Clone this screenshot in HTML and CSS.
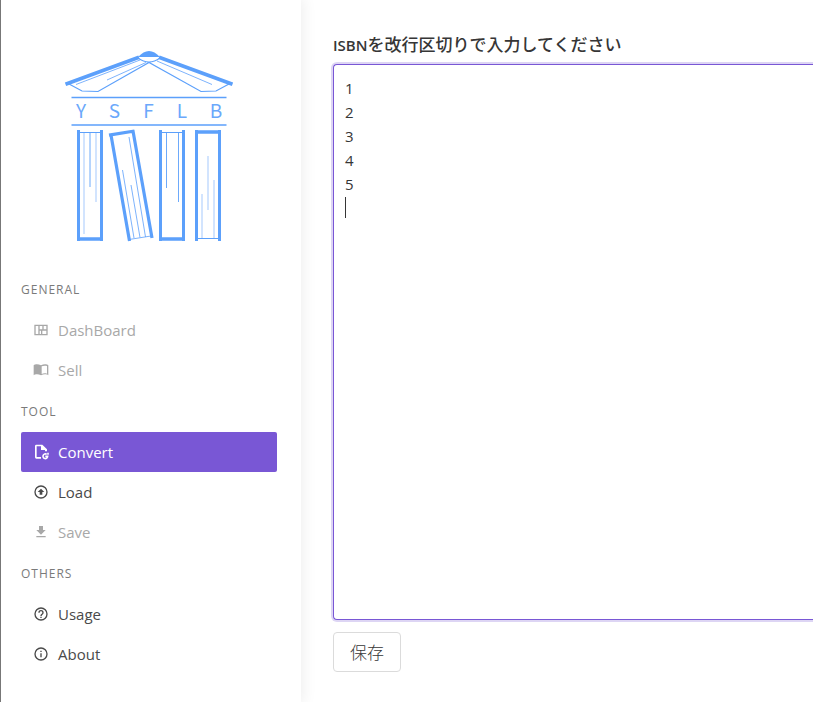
FILE: index.html
```html
<!DOCTYPE html>
<html lang="ja">
<head>
<meta charset="utf-8">
<meta name="viewport" content="width=device-width, initial-scale=1">
<title>YSFLB</title>
<link rel="stylesheet" href="styles.css">
</head>
<body>
<div class="app">
  <aside class="sidebar">
    <svg class="logo" viewBox="55 40 190 210" role="img" aria-label="YSFLB">
      <g fill="none" stroke="#5ca0fb">
        <path d="M138 57Q149 45 160 57Z" fill="#5ca0fb" stroke="none"/>
        <path d="M65.500 84.200 139 57.200M159 57.200 232.500 84.200" stroke-width="3.800"/>
        <path d="M69 84 82 91 98 91.500 149 62.500 201 91.500 216 91 229 84M138 58Q149 66 160 58" stroke-width="1.200"/>
        <path d="M76 84.500 140 60M107 80 146 62.500M157 61 212 84.500" stroke-width=".8"/>
        <path d="M71.500 97.500H226.500M71.500 125H226.500" stroke-width="1.600"/>
        <path d="M78.500 130V241M101.500 130V241M160.500 130V241M183.500 130V241M196.500 130V241M219.500 130V241" stroke-width="3"/>
        <path d="M77 239H103M159 239H185M195 132H221" stroke-width="3.600"/>
        <path d="M79 132.500H102M161 132.500H184M196 238.500H220" />
        <path d="M90 133V187M166.500 133V188M178.500 133V202" stroke-width=".9"/>
        <path d="M84 133V234M96 133V202M208 156V210M202 194V238M214 180V238" stroke-width="1.200" stroke="#b5d3fd"/>
        <path d="M109 135.200 134.500 131M111 135 129.500 241M133 131 152 238" stroke-width="3.200"/>
        <path d="M129 239.500 151 236M129 137 145.500 237M122.500 170 134 238M131 185 140 237.500" stroke-width=".8"/>
      </g>
      <g class="logo-letters">
        <text x="81" y="118">Y</text><text x="114.500" y="118">S</text><text x="148.500" y="118">F</text><text x="182" y="118">L</text><text x="216" y="118">B</text>
      </g>
    </svg>
    <nav class="menu">
      <p class="menu-label">General</p>
      <ul>
        <li><a class="disabled" aria-disabled="true"><svg class="icon" viewBox="0 0 24 24"><path fill-rule="evenodd" d="M2 4V20H22V4ZM4 6H8V18H4ZM10 6H14V11H10ZM16 6H20V11H16ZM10 13H12V18H10ZM14 13H20V18H14Z"/></svg>DashBoard</a></li>
        <li><a class="disabled" aria-disabled="true"><svg class="icon" viewBox="0 0 24 24"><path fill-rule="evenodd" d="M12 5C10 3.800 8 3.500 6 3.500S2 4 1 5V20C2 19 4 18.500 6 18.500S10 19 12 20C14 19 16 18.500 18 18.500S22 19 23 20V5C22 4 20 3.500 18 3.500S14 3.800 12 5ZM21 17.500C18.500 16.500 15.500 16.700 13 18V6.500C15.500 5.300 18.500 5.300 21 6Z"/></svg>Sell</a></li>
      </ul>
      <p class="menu-label">Tool</p>
      <ul>
        <li><a class="active" href="#convert"><svg class="icon" viewBox="0 0 24 24"><path fill-rule="evenodd" d="M5 1H14L21 8V11H18V9H12V3.500H5.500V19.500H12V22H5Q3 22 3 20V3Q3 1 5 1Z"/><path fill="none" stroke="currentColor" stroke-width="2.400" d="M20.500 15.500A3.500 3.500 0 1 0 22 18.500H18.500M22.500 13V16"/></svg>Convert</a></li>
        <li><a href="#load"><svg class="icon" viewBox="0 0 24 24"><circle cx="12" cy="12" r="9" fill="none" stroke="currentColor" stroke-width="2"/><path d="M12 7 17 12H14V16H10V12H7Z"/></svg>Load</a></li>
        <li><a class="disabled" aria-disabled="true"><svg class="icon" viewBox="0 0 24 24"><path d="M5 20H19V18H5ZM19 9H15V3H9V9H5L12 16Z"/></svg>Save</a></li>
      </ul>
      <p class="menu-label">Others</p>
      <ul>
        <li><a href="#usage"><svg class="icon" viewBox="0 0 24 24"><circle cx="12" cy="12" r="9" fill="none" stroke="currentColor" stroke-width="2"/><path d="M11 18H13V16H11ZM12 6A4 4 0 0 0 8 10H10A2 2 0 0 1 14 10C14 12 11 11.750 11 15H13C13 12.750 16 12.500 16 10A4 4 0 0 0 12 6Z"/></svg>Usage</a></li>
        <li><a href="#about"><svg class="icon" viewBox="0 0 24 24"><circle cx="12" cy="12" r="9" fill="none" stroke="currentColor" stroke-width="2"/><path d="M11 9H13V7H11ZM11 17H13V11H11Z"/></svg>About</a></li>
      </ul>
    </nav>
  </aside>
  <main class="content">
    <label class="label" for="isbn"><span class="latin">ISBN</span>を改行区切りで入力してください</label>
    <div class="control">
      <textarea id="isbn" class="textarea" rows="22">1
2
3
4
5
</textarea>
      <span class="caret"></span>
    </div>
    <button class="button" type="button">保存</button>
  </main>
</div>
</body>
</html>
```
FILE: styles.css
```css
* {
  box-sizing: border-box;
}

body {
  margin: 0;
  background: #fff;
  color: #4a4a4a;
  font: 15px/24px "Open Sans", "Noto Sans CJK JP", sans-serif;
}

.app {
  display: flex;
  min-height: 100vh;
  overflow: hidden;
  border-left: 1px solid #777;
}

.sidebar {
  flex: 0 0 300px;
  padding: 40px 24px 20px 20px;
  box-shadow: 0 0 14px 2px rgba(10, 10, 10, 0.07);
}

.logo {
  display: block;
  width: 190px;
  height: 210px;
  margin: 0 auto 18px 34px;
}

.logo-letters {
  fill: #6ba8fb;
  font: 19px "Liberation Sans Narrow", "Noto Sans CJK JP", sans-serif;
  text-anchor: middle;
}

.menu-label {
  margin: 0;
  padding: 10px 0 8px;
  color: #7a7a7a;
  font-size: 12px;
  letter-spacing: 1px;
  text-transform: uppercase;
}

.menu ul {
  margin: 0;
  padding: 0;
  list-style: none;
}

.menu a {
  display: flex;
  align-items: center;
  gap: 9px;
  padding: 8px 12px;
  border-radius: 2px;
  color: #4a4a4a;
  text-decoration: none;
}

.menu a.active {
  background: #7957d5;
  color: #fff;
}

.menu a.disabled {
  color: #a8a8a8;
}

.icon {
  width: 16px;
  height: 16px;
  fill: currentColor;
}

.content {
  flex: 1;
  min-width: 0;
  padding: 32px 0 20px 32px;
}

.label {
  display: block;
  height: 24px;
  margin-bottom: 8px;
  color: #363636;
  font: 500 17px/24px "Noto Sans CJK JP", sans-serif;
}

.latin {
  font: 600 15px/24px "Open Sans", sans-serif;
}

.control {
  position: relative;
  margin-bottom: 12px;
}

.textarea {
  display: block;
  width: 100%;
  padding: 11px 11px 15px;
  border: 1px solid #7957d5;
  border-right: 0;
  border-radius: 4px 0 0 4px;
  outline: 0;
  box-shadow: 0 0 0 2px rgba(121, 87, 213, 0.25);
  color: #363636;
  font: inherit;
  resize: none;
  overflow: hidden;
}

.caret {
  position: absolute;
  top: 133px;
  left: 12px;
  width: 1px;
  height: 21px;
  background: #363636;
}

.button {
  height: 40px;
  padding: 0 16px;
  border: 1px solid #dbdbdb;
  border-radius: 4px;
  background: #fff;
  color: #363636;
  font: 300 17px/24px "Noto Sans CJK JP", sans-serif;
}
```
